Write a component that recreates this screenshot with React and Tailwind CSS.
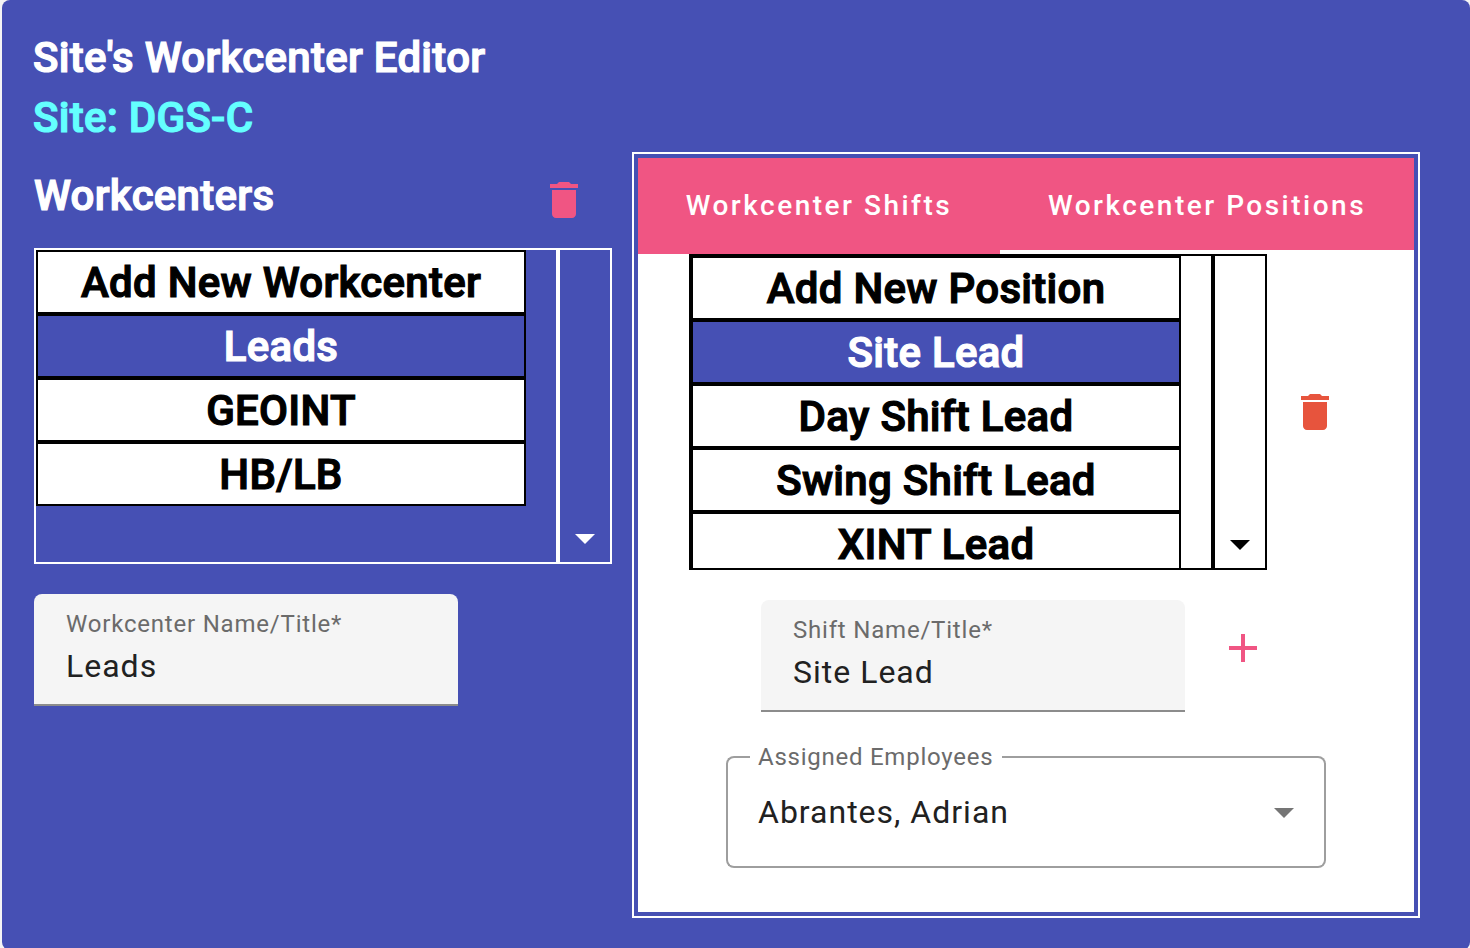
import React from 'react';

const workcenters = ['Add New Workcenter', 'Leads', 'GEOINT', 'HB/LB'];
const positions = ['Add New Position', 'Site Lead', 'Day Shift Lead', 'Swing Shift Lead', 'XINT Lead'];

function Icon({ d, className }) {
  return (
    <svg viewBox="0 0 24 24" fill="currentColor" className={`size-12 shrink-0 ${className}`}>
      <path d={d} />
    </svg>
  );
}

const TRASH = 'M6 19c0 1.1.9 2 2 2h8c1.1 0 2-.9 2-2V7H6v12zM19 4h-3.5l-1-1h-5l-1 1H5v2h14V4z';
const PLUS = 'M19 13h-6v6h-2v-6H5v-2h6V5h2v6h6v2z';
const ARROW = 'M7 10l5 5 5-5z';

const heavy = 'text-[42px] font-medium tracking-[0.28px] [-webkit-text-stroke:1.2px_currentColor] whitespace-nowrap';

function ItemList({ items, selected, frame }) {
  return (
    <div className="flex h-[316px] w-[578px] shrink-0">
      <div className={`w-[524px] overflow-hidden border-2 ${frame}`}>
        {items.map((item) => (
          <div
            key={item}
            className={`flex h-16 w-[490px] items-center justify-center border-2 border-black ${heavy} ${
              item === selected ? 'bg-[#4650b4] text-white' : 'bg-white text-black'
            }`}
          >
            {item}
          </div>
        ))}
      </div>
      <div className={`flex w-[54px] items-end justify-center border-2 ${frame}`}>
        <Icon d={ARROW} className="" />
      </div>
    </div>
  );
}

function FilledField({ label, value }) {
  return (
    <div className="h-28 w-[424px] shrink-0 rounded-t-lg border-b-2 border-[#8c8c8c] bg-[#f5f5f5] px-8 pt-3.5">
      <div className="text-2xl leading-8 tracking-[0.8px] text-[#6b6b6b]">{label}</div>
      <div className="mt-1.5 text-[32px] leading-10 tracking-[1px] text-[#212121]">{value}</div>
    </div>
  );
}

export default function App() {
  return (
    <div className="h-[948px] w-[1470px] overflow-hidden bg-[#f5f5f5] pl-0.5 font-['Roboto',sans-serif]">
      <div className="h-[950px] rounded-lg bg-[#4650b4] pl-8 pt-7">
        <h1 className={`-ml-px leading-[60px] text-white ${heavy}`}>Site's Workcenter Editor</h1>
        <h2 className={`-ml-px leading-[60px] text-[#64ffff] ${heavy}`}>Site: DGS-C</h2>

        <div className="mt-1 flex items-start">
          <section className="w-[578px]">
            <div className="flex h-24 items-center justify-between pr-[24.5px]">
              <h3 className={`pb-2.5 text-white ${heavy}`}>Workcenters</h3>
              <Icon d={TRASH} className="text-[#f05583]" />
            </div>
            <ItemList items={workcenters} selected="Leads" frame="border-white text-white" />
            <div className="mt-[30px]">
              <FilledField label="Workcenter Name/Title*" value="Leads" />
            </div>
          </section>

          <section className="ml-5 h-[766px] w-[788px] border-2 border-white p-1">
            <div className="h-full bg-white">
              <div className="flex h-24 bg-[#f05583] text-[28px] font-medium tracking-[2.5px] text-white">
                <div className="flex w-[362px] items-center justify-center whitespace-nowrap">Workcenter Shifts</div>
                <div className="flex flex-1 items-center justify-center whitespace-nowrap border-b-4 border-white pt-1">
                  Workcenter Positions
                </div>
              </div>

              <div className="flex items-center pl-[51px]">
                <div className="-mr-0.5 h-[316px] border-l-2 border-black" />
                <ItemList items={positions} selected="Site Lead" frame="border-black text-black" />
                <Icon d={TRASH} className="ml-6 text-[#e7543d]" />
              </div>

              <div className="mt-[30px] flex items-start pl-[123px]">
                <FilledField label="Shift Name/Title*" value="Site Lead" />
                <Icon d={PLUS} className="ml-[34px] mt-6 text-[#f05583]" />
              </div>

              <div className="ml-[88px] mt-11 flex h-28 w-[600px]">
                <div className="w-6 rounded-l-lg border-y-2 border-l-2 border-[#9e9e9e]" />
                <div className="w-[252px] border-b-2 border-[#9e9e9e] pl-2">
                  <div className="-mt-[15px] whitespace-nowrap text-2xl leading-8 tracking-[0.75px] text-[#6b6b6b]">
                    Assigned Employees
                  </div>
                  <div className="mt-[19px] whitespace-nowrap text-[32px] leading-10 tracking-[1px] text-[#212121]">
                    Abrantes, Adrian
                  </div>
                </div>
                <div className="flex flex-1 items-center justify-end rounded-r-lg border-y-2 border-r-2 border-[#9e9e9e] pr-4">
                  <Icon d={ARROW} className="text-[#757575]" />
                </div>
              </div>
            </div>
          </section>
        </div>
      </div>
    </div>
  );
}
